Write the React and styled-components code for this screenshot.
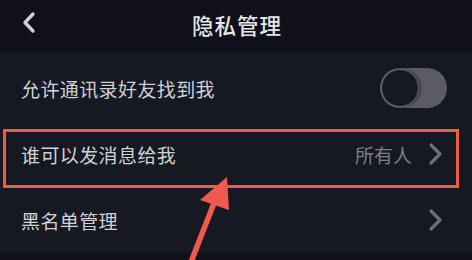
import React from "react";
import styled, { createGlobalStyle } from "styled-components";

const Global = createGlobalStyle`
  html, body { margin: 0; padding: 0; background: #0f1019; }
  body { font-family: "Noto Sans CJK SC", "Noto Sans", sans-serif; }
`;

const Page = styled.div`
  position: relative;
  width: 472px;
  height: 260px;
  overflow: hidden;
  background: #0f1019;
`;

const Header = styled.div`
  height: 53px;
  display: flex;
  align-items: center;
  justify-content: center;
  position: relative;
  background: #0f1019;
`;

const Back = styled.div`
  position: absolute;
  left: 20px;
  top: 11px;
  display: flex;
`;

const Title = styled.div`
  color: #e6e6e8;
  font-size: 21.5px;
  font-weight: 500;
  letter-spacing: 1px;
  margin-top: -4px;
  margin-left: 2px;
`;

const List = styled.div`
  background: #161822;
  padding-top: 2px;
  height: 198px;
`;

const Row = styled.div`
  position: relative;
  height: 66px;
  display: flex;
  align-items: center;
  padding-left: 21px;
  padding-right: ${(p) => p.$pr || 21}px;
`;

const Label = styled.div`
  flex: 1;
  color: #d2d2d6;
  font-size: 19px;
  letter-spacing: 0.4px;
`;

const Value = styled.div`
  color: #7d7e86;
  font-size: 19px;
  margin-right: 16px;
`;

const Toggle = styled.div`
  width: 67px;
  height: 40px;
  border-radius: 20px;
  background: #5b5c67;
  position: relative;
  box-sizing: border-box;
`;

const Knob = styled.div`
  position: absolute;
  left: 1px;
  top: 1px;
  width: 38px;
  height: 38px;
  border-radius: 50%;
  background: #161822;
  box-sizing: border-box;
  border: 1.5px solid #6a6b75;
  box-shadow: 2px 0 3px rgba(0, 0, 0, 0.4);
`;

const Highlight = styled.div`
  position: absolute;
  left: 3px;
  right: 13px;
  top: 8px;
  bottom: -1px;
  border: 3px solid #ef5a4f;
  pointer-events: none;
`;

const ArrowLayer = styled.svg`
  position: absolute;
  left: 0;
  top: 0;
  pointer-events: none;
`;

const Chevron = ({ color = "#6d6e77" }) => (
  <svg width="16" height="24" viewBox="0 0 16 24">
    <path d="M3 3 L12 12 L3 21" fill="none" stroke={color} strokeWidth="3.2" strokeLinecap="round" strokeLinejoin="round" />
  </svg>
);

export default function App() {
  return (
    <>
      <Global />
      <Page>
        <Header>
          <Back>
            <svg width="18" height="24" viewBox="0 0 18 24">
              <path d="M13 3 L5 11.5 L13 20" fill="none" stroke="#cfcfd3" strokeWidth="3.4" strokeLinecap="round" strokeLinejoin="round" />
            </svg>
          </Back>
          <Title>隐私管理</Title>
        </Header>
        <List>
          <Row $pr={25}>
            <Label>允许通讯录好友找到我</Label>
            <Toggle>
              <Knob />
            </Toggle>
          </Row>
          <Row $pr={28}>
            <Label>谁可以发消息给我</Label>
            <Value>所有人</Value>
            <Chevron />
            <Highlight />
          </Row>
          <Row $pr={28}>
            <Label>黑名单管理</Label>
            <Chevron />
          </Row>
        </List>
        <ArrowLayer width="472" height="260" viewBox="0 0 472 260">
          <line x1="191" y1="262" x2="216" y2="198" stroke="#ef5a4f" strokeWidth="5.5" />
          <polygon points="227,177 200,200 229,210" fill="#ef5a4f" />
        </ArrowLayer>
      </Page>
    </>
  );
}
